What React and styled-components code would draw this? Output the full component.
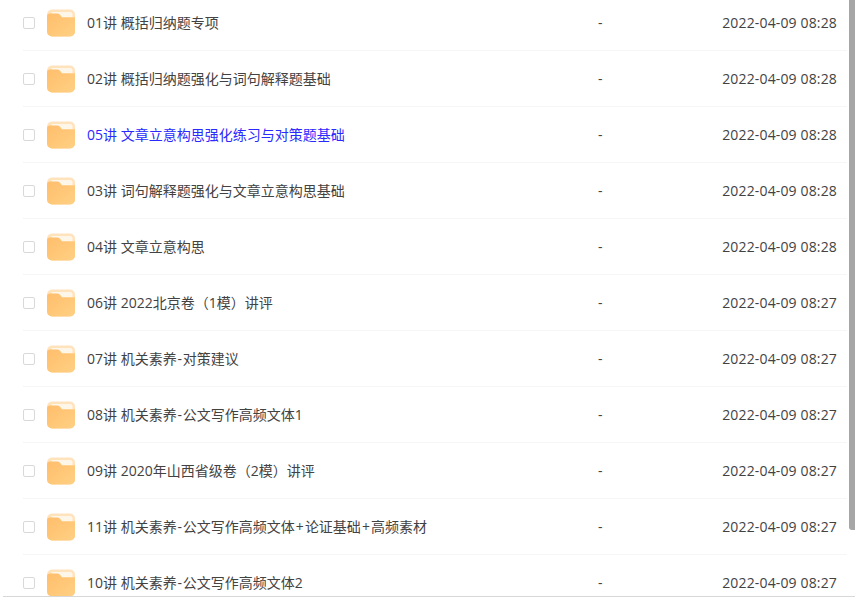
import React from 'react'
import styled, { createGlobalStyle } from 'styled-components'

const GlobalStyle = createGlobalStyle`
  html, body { margin: 0; padding: 0; background: #fff; }
  body { font-family: "Open Sans", "Noto Sans CJK SC", sans-serif; }
`

const files = [
  { name: '01讲 概括归纳题专项', time: '2022-04-09 08:28' },
  { name: '02讲 概括归纳题强化与词句解释题基础', time: '2022-04-09 08:28' },
  { name: '05讲 文章立意构思强化练习与对策题基础', time: '2022-04-09 08:28', active: true },
  { name: '03讲 词句解释题强化与文章立意构思基础', time: '2022-04-09 08:28' },
  { name: '04讲 文章立意构思', time: '2022-04-09 08:28' },
  { name: '06讲 2022北京卷（1模）讲评', time: '2022-04-09 08:27' },
  { name: '07讲 机关素养-对策建议', time: '2022-04-09 08:27' },
  { name: '08讲 机关素养-公文写作高频文体1', time: '2022-04-09 08:27' },
  { name: '09讲 2020年山西省级卷（2模）讲评', time: '2022-04-09 08:27' },
  { name: '11讲 机关素养-公文写作高频文体+论证基础+高频素材', time: '2022-04-09 08:27' },
  { name: '10讲 机关素养-公文写作高频文体2', time: '2022-04-09 08:27' },
]

const FolderIcon = () => (
  <svg width="28" height="28" viewBox="0 0 28 28">
    <defs>
      <linearGradient id="folderFill" x1="0" y1="0" x2="1" y2="1">
        <stop offset="0" stopColor="#ffbe6c" />
        <stop offset="1" stopColor="#ffd083" />
      </linearGradient>
    </defs>
    <rect y="0.5" width="28" height="27" rx="5" fill="#ffe3bd" />
    <path d="M5 3h18a2.5 2.5 0 0 1 2.5 2.5V9H5z" fill="#fff6ea" />
    <path d="M0 7.5a3 3 0 0 1 3-3h7.5c1.6 0 2.4 1 3.3 2.2.8 1.1 1.4 1.5 2.4 1.5H28V22.500a5 5 0 0 1-5 5H5a5 5 0 0 1-5-5z" fill="url(#folderFill)" />
  </svg>
)

const Page = styled.div`
  position: relative;
  width: 855px;
  height: 597px;
  overflow: hidden;
  background: #fff;
  &::after {
    content: '';
    position: absolute;
    left: 3px;
    right: 0;
    bottom: 0;
    height: 1px;
    background: #d8d8d8;
  }
`

const List = styled.ul`
  list-style: none;
  margin: -5px 0 0;
  padding: 0 8px 0 23px;
`

const Row = styled.li`
  display: flex;
  align-items: center;
  height: 55px;
  padding-right: 10px;
  border-bottom: 1px solid #f6f6f6;
  font-size: 14px;
  color: ${p => (p.$active ? '#2a2aff' : '#424242')};
`

const Check = styled.span`
  flex: none;
  width: 10px;
  height: 10px;
  margin-right: 12px;
  border: 1px solid #d9d9d9;
  border-radius: 2px;
`

const Icon = styled.span`
  flex: none;
  display: flex;
  width: 28px;
  height: 28px;
  margin-right: 12px;
`

const Name = styled.span`
  flex: 1;
  padding-bottom: 2px;
  white-space: nowrap;
`

const Sep = styled.span`
  padding: 0 ${p => (p.$plus ? '1.1px' : '0.75px')};
`

const Size = styled.span`
  flex: none;
  width: 124px;
  color: #424242;
`

const Time = styled.span`
  flex: none;
  width: 115px;
  text-align: right;
  white-space: nowrap;
  letter-spacing: 0.15px;
  color: #424242;
`

const Scrollbar = styled.div`
  position: absolute;
  top: 0;
  right: 0;
  width: 6px;
  height: 530px;
  background: #a6a6a6;
  border-bottom-left-radius: 3px;
`

const App = () => (
  <Page>
    <GlobalStyle />
    <List>
      {files.map(f => (
        <Row key={f.name} $active={f.active}>
          <Check />
          <Icon><FolderIcon /></Icon>
          <Name>
            {f.name.split(/([+-])/).map((part, i) =>
              i % 2 ? <Sep key={i} $plus={part === '+'}>{part}</Sep> : part
            )}
          </Name>
          <Size>-</Size>
          <Time>{f.time}</Time>
        </Row>
      ))}
    </List>
    <Scrollbar />
  </Page>
)

export default App
